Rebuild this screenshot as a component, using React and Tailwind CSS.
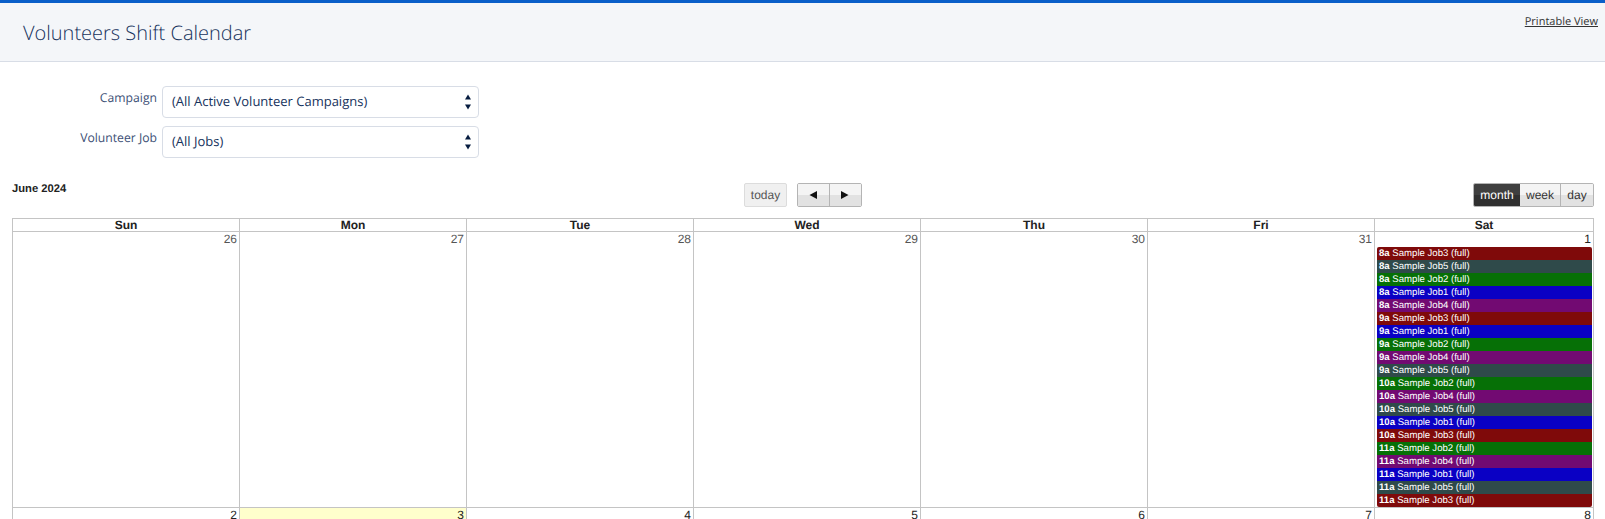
const days = ['Sun', 'Mon', 'Tue', 'Wed', 'Thu', 'Fri', 'Sat'];
const colors = {
  3: 'bg-[#7f0a0a]',
  5: 'bg-[#2f4a4a]',
  2: 'bg-[#067006]',
  1: 'bg-[#0a00c4]',
  4: 'bg-[#720a72]',
};
const events = [
  ['8a', 3], ['8a', 5], ['8a', 2], ['8a', 1], ['8a', 4],
  ['9a', 3], ['9a', 1], ['9a', 2], ['9a', 4], ['9a', 5],
  ['10a', 2], ['10a', 4], ['10a', 5], ['10a', 1], ['10a', 3],
  ['11a', 2], ['11a', 4], ['11a', 1], ['11a', 5], ['11a', 3],
];
const cols = 'grid grid-cols-[228px_227px_227px_227px_227px_227px_219px]';

function Updown() {
  return (
    <svg width="8" height="16" viewBox="0 0 8 16">
      <path d="M4 0.5 L7 5.5 L1 5.5 Z" fill="#061c3f" />
      <path d="M4 15.5 L1 10.5 L7 10.5 Z" fill="#061c3f" />
    </svg>
  );
}

function Select({ text }) {
  return (
    <div className="w-[317px] h-[32px] bg-white border border-[#d8dde6] rounded-[4px] flex items-center justify-between pl-[9px] pr-[6px] text-[13px] text-[#16325c]">
      <span>{text}</span>
      <Updown />
    </div>
  );
}

function Cell({ n, today, muted, children, first }) {
  return (
    <div className={`border-t border-[#c4c4c4] ${first ? 'border-l' : ''} border-r ${today ? 'bg-[#ffffcc]' : 'bg-white'} min-w-0`}>
      <div className={`text-right pr-[2px] h-[13px] leading-[14px] text-[12px] ${muted ? 'text-[#555]' : 'text-[#222]'}`}>{n}</div>
      {children}
    </div>
  );
}

export default function App() {
  return (
    <div className="w-[1605px] h-[519px] overflow-hidden bg-white relative font-['Liberation_Sans',Arial,sans-serif] [text-rendering:geometricPrecision]">
      <div className="h-[3px] bg-[#0a5fc9]" />
      <div className="h-[59px] bg-[#f4f6f9] border-b border-[#d8dde6] flex justify-between font-['Open_Sans',sans-serif]">
        <div className="pl-[23px] pt-[16px] text-[20px] leading-[27px] font-light text-[#16325c]">Volunteers Shift Calendar</div>
        <a className="pr-[7px] pt-[12px] text-[11px] leading-[14px] text-[#333] underline">Printable View</a>
      </div>

      <div className="pt-[24px] font-['Open_Sans',sans-serif]">
        <div className="flex">
          <div className="w-[157px] text-right text-[12.2px] leading-[16px] pt-[4px] text-[#3c4f75]">Campaign</div>
          <div className="ml-[5px]"><Select text="(All Active Volunteer Campaigns)" /></div>
        </div>
        <div className="flex mt-[8px]">
          <div className="w-[157px] text-right text-[12.2px] leading-[16px] pt-[4px] text-[#3c4f75]">Volunteer Job</div>
          <div className="ml-[5px]"><Select text="(All Jobs)" /></div>
        </div>
      </div>

      <div className="relative h-[60px]">
        <div className="pl-[12px] pt-[25px] text-[11.2px] leading-[13px] font-bold text-[#222]">June 2024</div>
        <div className="absolute left-[744px] top-[25px] flex gap-[10px]">
          <div className="w-[43px] h-[24px] rounded-[2px] border border-[#dcdcdc] bg-[#f0f0f0] text-[#555] text-[12px] flex items-center justify-center">today</div>
          <div className="flex h-[24px] w-[65px] border border-[#b4b4b4] rounded-[2px] overflow-hidden">
            <div className="w-1/2 border-r border-[#b4b4b4] bg-[linear-gradient(#f4f4f4_50%,#e2e2e2_50%)] flex items-center justify-center">
              <svg width="10" height="10" viewBox="0 0 10 10"><path d="M1.5 5 L9 1 L9 9 Z" fill="#111" /></svg>
            </div>
            <div className="w-1/2 bg-[linear-gradient(#f4f4f4_50%,#e2e2e2_50%)] flex items-center justify-center">
              <svg width="10" height="10" viewBox="0 0 10 10"><path d="M8.5 5 L1 1 L1 9 Z" fill="#111" /></svg>
            </div>
          </div>
        </div>
        <div className="absolute left-[1473px] top-[25px] flex h-[24px] text-[12px] rounded-[2px] overflow-hidden border border-[#b4b4b4]">
          <div className="w-[46px] bg-[linear-gradient(#3f3f3f_50%,#303030_50%)] text-white flex items-center justify-center">month</div>
          <div className="w-[41px] border-r border-[#b4b4b4] bg-[linear-gradient(#f4f4f4_50%,#e2e2e2_50%)] text-[#333] flex items-center justify-center">week</div>
          <div className="w-[32px] bg-[linear-gradient(#f4f4f4_50%,#e2e2e2_50%)] text-[#333] flex items-center justify-center">day</div>
        </div>
      </div>

      <div className="ml-[12px] w-[1582px]">
        <div className={cols}>
          {days.map((d, i) => (
            <div key={d} className={`h-[13px] border-t border-[#c4c4c4] border-r ${i === 0 ? 'border-l' : ''} text-center text-[12px] leading-[13px] font-bold text-[#222]`}>{d}</div>
          ))}
        </div>
        <div className={cols}>
          {[26, 27, 28, 29, 30, 31].map((n, i) => (
            <Cell key={n} n={n} muted first={i === 0} />
          ))}
          <Cell n={1}>
            <div className="h-[2px]" />
            {events.map(([t, j], i) => (
              <div key={i} className={`h-[13px] ml-[2px] mr-[1px] px-[2px] ${colors[j]} text-white text-[9.6px] leading-[13px] whitespace-nowrap ${i === 0 ? 'rounded-t-[2px]' : ''} ${i === events.length - 1 ? 'rounded-b-[2px]' : ''}`}>
                <b>{t}</b> Sample Job{j} (full)
              </div>
            ))}
          </Cell>
        </div>
        <div className={cols}>
          {[2, 3, 4, 5, 6, 7, 8].map((n, i) => (
            <Cell key={n} n={n} first={i === 0} today={n === 3} />
          ))}
        </div>
      </div>
    </div>
  );
}
